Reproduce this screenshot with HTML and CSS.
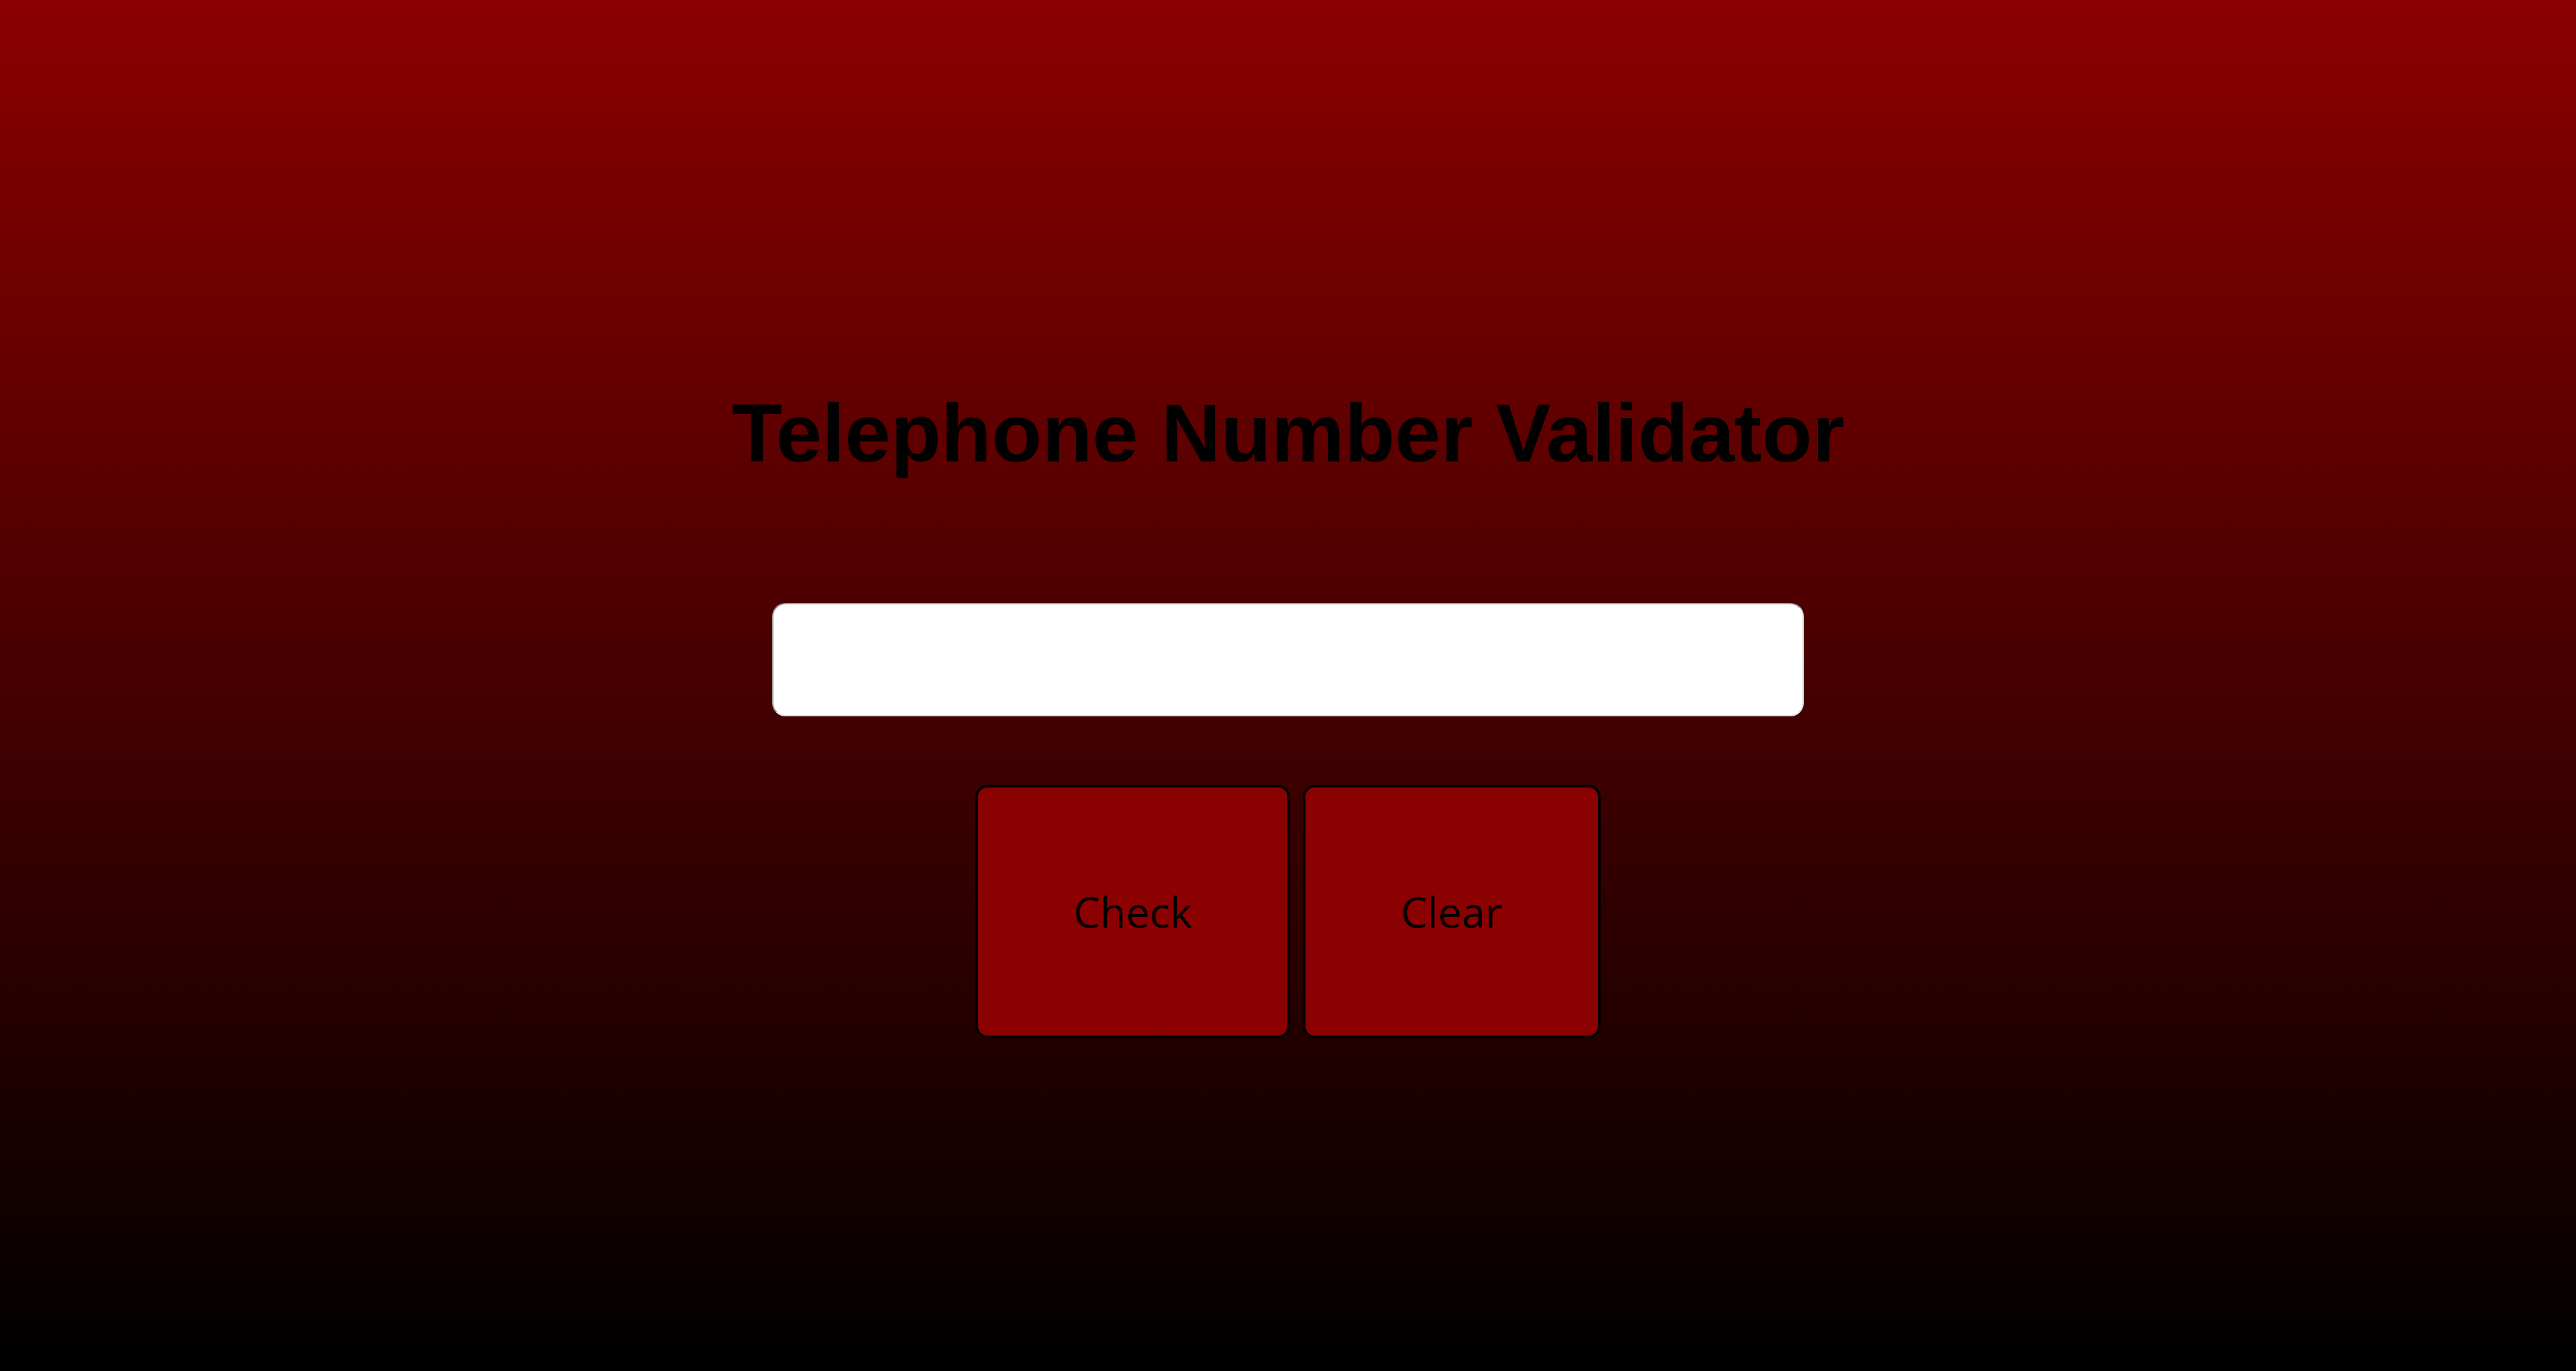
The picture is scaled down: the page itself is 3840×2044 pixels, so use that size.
FILE: index.html
```html
<!DOCTYPE html>
<html lang="en">
<head>
<meta charset="utf-8">
<title>Telephone Number Validator</title>
<link rel="stylesheet" href="styles.css">
</head>
<body>
<main class="app">
  <h1 class="title">Telephone Number Validator</h1>
  <input class="phone-input" type="text" aria-label="Phone number">
  <div class="actions">
    <button class="btn" type="button">Check</button>
    <button class="btn" type="button">Clear</button>
  </div>
</main>
</body>
</html>
```

FILE: styles.css
```css
html, body {
  margin: 0;
  padding: 0;
}

body {
  min-height: 100vh;
  background: linear-gradient(to bottom, #8b0000 0%, #000000 100%);
  font-family: "Liberation Sans", Arial, sans-serif;
}

.app {
  display: flex;
  flex-direction: column;
  align-items: center;
  padding-top: 578px;
}

.title {
  margin: 0;
  font-family: "Liberation Sans", Arial, sans-serif;
  font-weight: bold;
  font-size: 123px;
  line-height: 135px;
  color: #000;
  text-align: center;
}

.phone-input {
  box-sizing: border-box;
  margin-top: 186px;
  width: 1538px;
  height: 169px;
  border-width: 2px;
  border-style: solid;
  border-color: #9a9a9a #d4d4d4 #e0e0e0 #a0a0a0;
  border-radius: 20px;
  background: #ffffff;
  padding: 0 24px;
  font-family: "Open Sans", sans-serif;
  font-size: 60px;
  outline: none;
}

.actions {
  display: flex;
  gap: 19px;
  margin-top: 102px;
}

.btn {
  box-sizing: border-box;
  height: 378px;
  padding: 0 142px;
  border: 4px solid #000;
  border-radius: 18px;
  background: #8b0000;
  color: #000;
  font-family: "Open Sans", sans-serif;
  font-size: 63px;
  line-height: 86px;
  cursor: pointer;
}
```
